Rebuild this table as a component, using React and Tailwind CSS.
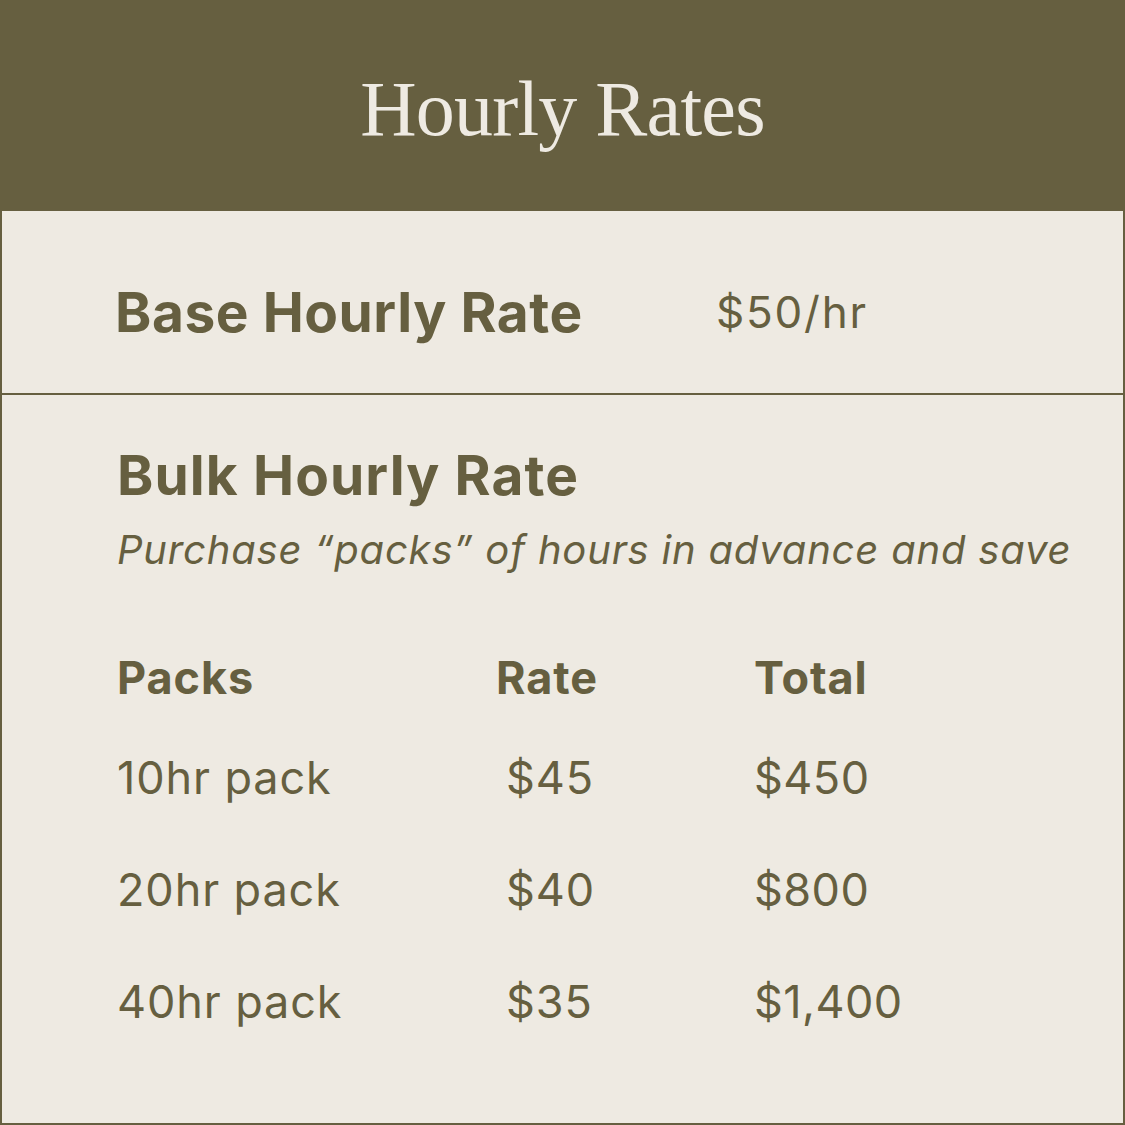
const packs = [
  { name: '10hr pack', rate: '$45', total: '$450' },
  { name: '20hr pack', rate: '$40', total: '$800' },
  { name: '40hr pack', rate: '$35', total: '$1,400' },
]

export default function App() {
  return (
    <div className="w-[1125px] h-[1125px] bg-[#eeeae2] border-x-2 border-b-2 border-[#665f40] text-[#665f40] font-['Inter',sans-serif] flex flex-col">
      {/* Header */}
      <div className="h-[211px] -mx-[2px] bg-[#665f40] flex items-center justify-center">
        <h1 className="font-['Liberation_Serif',serif] text-[78px] leading-none text-[#eeeae2] tracking-[-0.01em] mt-[6px]">
          Hourly Rates
        </h1>
      </div>

      {/* Base rate */}
      <div className="h-[184px] border-b-2 border-[#665f40] flex items-center pl-[113px] pt-[20px]">
        <p className="w-[601px] text-[55px] font-bold leading-none tracking-[0.01em]">Base Hourly Rate</p>
        <p className="text-[44px] leading-none tracking-[0.04em]">$50/hr</p>
      </div>

      {/* Bulk rate */}
      <div className="flex-1 pl-[115px] pt-[53px]">
        <h2 className="text-[55px] font-bold leading-none tracking-[0.02em]">Bulk Hourly Rate</h2>
        <p className="mt-[27px] text-[40px] italic leading-none tracking-[0.02em]">Purchase “packs” of hours in advance and save</p>

        <div className="mt-[85px] grid grid-cols-[379px_258px_1fr]">
          <p className="text-[45px] font-bold leading-none tracking-[0.02em]">Packs</p>
          <p className="text-[45px] font-bold leading-none tracking-[0.02em]">Rate</p>
          <p className="text-[45px] font-bold leading-none tracking-[0.02em]">Total</p>
          {packs.map((p, i) => (
            <div key={p.name} className="contents">
              <p className={`${i === 0 ? 'mt-[55px]' : 'mt-[67px]'} text-[45px] leading-none tracking-[0.02em]`}>{p.name}</p>
              <p className={`${i === 0 ? 'mt-[55px]' : 'mt-[67px]'} pl-[10px] text-[45px] leading-none tracking-[0.02em]`}>{p.rate}</p>
              <p className={`${i === 0 ? 'mt-[55px]' : 'mt-[67px]'} text-[45px] leading-none tracking-[0.01em]`}>{p.total}</p>
            </div>
          ))}
        </div>
      </div>
    </div>
  )
}
